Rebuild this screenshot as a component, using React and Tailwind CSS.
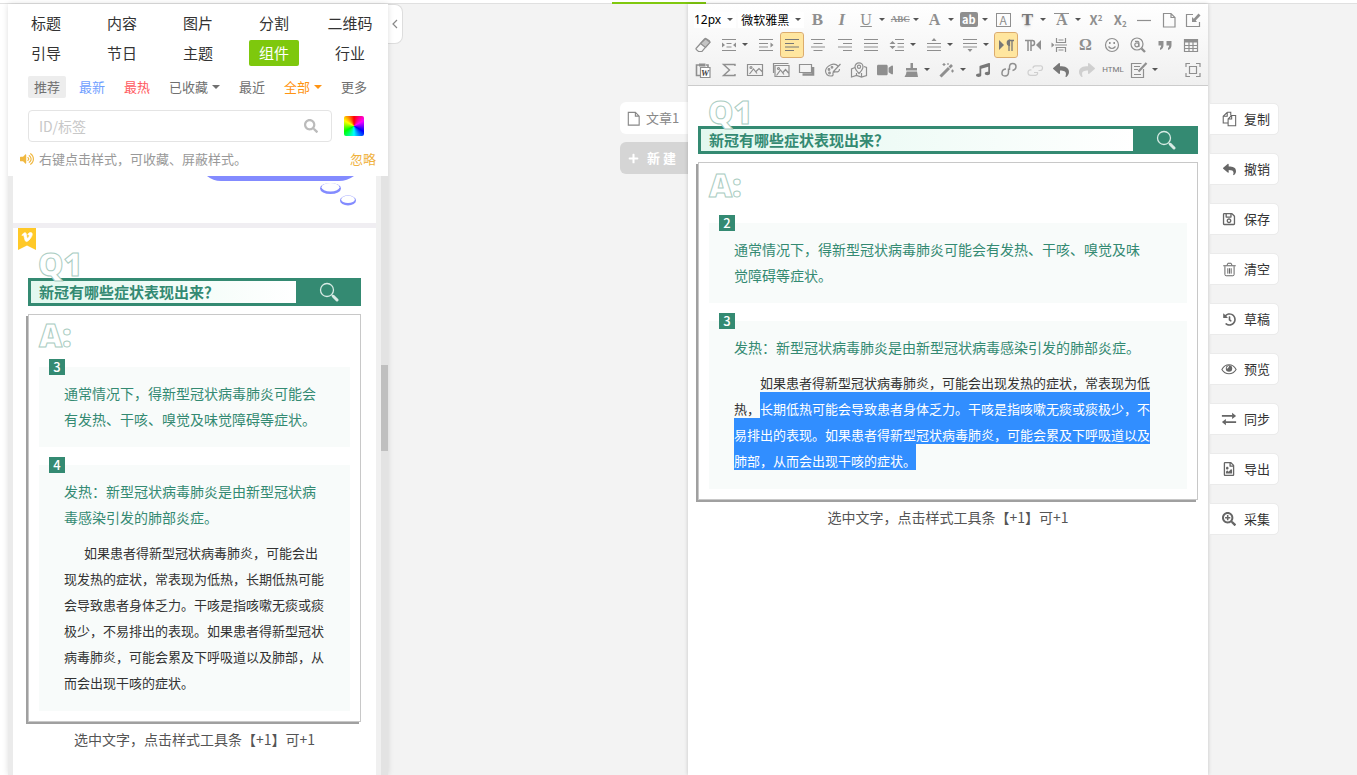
/**
 * @file App.jsx
 * @brief Rich text editor: style library on the left, article editor on the right
 */

import { useState } from 'react'
import { FaSearch, FaVolumeUp, FaReply, FaRegSave, FaHistory, FaRegFileImage, FaSearchPlus, FaPlus, FaVimeoV, FaMusic, FaShare, FaVideo } from 'react-icons/fa'

const CATEGORIES = ['标题', '内容', '图片', '分割', '二维码', '引导', '节日', '主题', '组件', '行业']

const FILTERS = [
  { label: '推荐', className: 'bg-[#ededed] text-[#707070]' },
  { label: '最新', className: 'text-[#6fa0ff]' },
  { label: '最热', className: 'text-[#ff5a5f]' },
  { label: '已收藏', className: 'text-[#707070]', caret: true },
  { label: '最近', className: 'text-[#707070]' },
  { label: '全部', className: 'text-[#ff9412]', caret: true },
  { label: '更多', className: 'text-[#707070]' },
]

/* ---------- icons ---------- */

function Icon({ children, size = 18, className = '' }) {
  return (
    <svg width={size} height={size} viewBox="0 0 18 18" fill="none" stroke="currentColor" strokeWidth="1.2" className={className} aria-hidden="true">
      {children}
    </svg>
  )
}

const PageIcon = ({ size }) => (
  <Icon size={size}><path d="M3.5 2.5h7.5l4 4v9.5H3.5zM11 2.5v4h4" /></Icon>
)

const FilesIcon = () => (
  <Icon size={16}><path d="M7 1.500L2.500 6v7.500H8M7 1.500V6H2.500M7 1.500h4V5M12 5L8 9v7.500h8.500V5zM12 5v4H8" /></Icon>
)

const TrashIcon = () => (
  <Icon size={15}><path d="M3.500 5v10q0 1.500 1.500 1.500h8q1.500 0 1.500-1.500V5M1.500 4.500h15M6 4l1-2.500h4L12 4M7 7.500V14M9 7.500V14M11 7.500V14" /></Icon>
)

const EyeIcon = () => (
  <Icon size={16}>
    <path d="M1 9.500C3 6 6 4.300 9 4.300s6 1.700 8 5.200c-2 3.200-5 4.800-8 4.800s-6-1.600-8-4.800z" />
    <circle cx="9" cy="8.500" r="3.600" fill="currentColor" stroke="none" />
    <path d="M7 8.300a2 2 0 0 1 2-2" stroke="#fff" />
  </Icon>
)

const ExchangeIcon = () => (
  <Icon size={16}>
    <path d="M1 5.500h12M5 12.500h12" strokeWidth="2" />
    <path d="M12.500 2l4.500 3.500L12.500 9zM5.500 9L1 12.500 5.500 16z" fill="currentColor" stroke="none" />
  </Icon>
)

const LensIcon = () => (
  <svg width="20" height="20" viewBox="0 0 20 20" fill="none" stroke="#d8ebe5" aria-hidden="true">
    <circle cx="8" cy="8" r="6.500" strokeWidth="1.300" />
    <path d="M12.800 12.800l1.800 1.800" strokeWidth="1.200" />
    <path d="M14.300 14.300l3.700 3.700" strokeWidth="3" strokeLinecap="round" />
  </svg>
)

const ICONS = {
  boxEdit: <Icon><path d="M9 3.500H2.500v12h13V11" /><path d="M8 11V6l1.800 1.800L14.500 2.500l2 2-4.800 5L13 11z" fill="currentColor" stroke="none" /></Icon>,
  dash: <Icon><path d="M2 9.500h14" /></Icon>,
  eraser: <Icon><path d="M2 12.500L10.500 3q.8-1 1.800-.3l3 2q1 .8.200 1.800L8 15.500H4.500L2.200 13.500z" /><path d="M6.500 7.500l5 4 4.500-5.200-4.500-3.500z" fill="#c4c4c4" /></Icon>,
  indentBoth: <Icon><path d="M2 3.500h14M6.500 7.500h5M6.500 11h5M2 14.500h14" /><path d="M2 6.500v5L5 9zM16 6.500v5L13 9z" fill="currentColor" stroke="none" /></Icon>,
  indent: <Icon><path d="M2 3.500h14M2 7.500h9M2 11h9M2 14.500h14" /><path d="M13.500 6.500v5l3-2.500z" fill="currentColor" stroke="none" /></Icon>,
  left: <Icon><path d="M2 3.500h14M2 7.500h9M2 11h14M2 14.500h9" /></Icon>,
  center: <Icon><path d="M2 3.500h14M4.500 7.500h9M2 11h14M4.500 14.500h9" /></Icon>,
  right: <Icon><path d="M2 3.500h14M7 7.500h9M2 11h14M7 14.500h9" /></Icon>,
  justify: <Icon><path d="M2 3.500h14M2 7.500h14M2 11h14M2 14.500h14" /></Icon>,
  lineHeight: <Icon><path d="M7 3.500h9M9.500 7.500H16M9.500 11H16M7 14.500h9" /><path d="M1.500 8L4.500 5l3 3zM1.500 10l3 3 3-3z" fill="currentColor" stroke="none" /></Icon>,
  spaceTop: <Icon><path d="M2 7.500h14M2 11h14M2 14.500h14" /><path d="M6.500 5L9 2l2.500 3z" fill="currentColor" stroke="none" /></Icon>,
  spaceBottom: <Icon><path d="M2 3.500h14M2 7.500h14M2 11h14" /><path d="M6.500 13L9 16l2.500-3z" fill="currentColor" stroke="none" /></Icon>,
  ltr: <Icon><path d="M2 4v10l5-5z" fill="currentColor" stroke="none" /><path d="M11.500 4.500h5.500M12 9v6M15 4.500V15" strokeWidth="1.300" /><path d="M12.500 4a2.800 2.800 0 0 0 0 5.500z" fill="currentColor" /></Icon>,
  rtl: <Icon><path d="M17 4v10l-5-5z" fill="currentColor" stroke="none" /><path d="M1 4.500h8M4 4.500V15M7 4.500V15M7 9.500h1.500q2 0 2-2.500t-2-2.500" strokeWidth="1.500" /></Icon>,
  pageBreak: <Icon><path d="M6.500 2v4.500h9V2M6.500 16v-4.500h9V16M8.500 4h5M8.500 14h5M5 9h12" /><path d="M1.500 6.500v5l3-2.500z" fill="currentColor" stroke="none" /></Icon>,
  smile: <Icon><circle cx="9" cy="9" r="6.500" /><path d="M5.500 10.500q3.500 4 7 0" /><path d="M6.800 6v2M11.200 6v2" strokeWidth="1.600" /></Icon>,
  findText: <Icon><circle cx="8" cy="8" r="6" /><path d="M12.500 12.500l3.500 3.500" strokeWidth="2.400" /><circle cx="7.800" cy="8.800" r="2" /><path d="M6 5.300h2.500q1.400 0 1.400 1.500V11" /></Icon>,
  quote: <Icon><path d="M2.500 5h5v4q0 4-3.500 5v-2q1.200-.6 1.200-2.500H2.500zM10.500 5h5v4q0 4-3.500 5v-2q1.200-.6 1.200-2.500h-2.700z" fill="currentColor" stroke="none" /></Icon>,
  table: <Icon><path d="M2.500 3.500h13v12h-13zM2.500 9.500h13M2.500 12.500h13M7 5v10M11 5v10" /><path d="M2.500 3h13v3.500h-13z" fill="currentColor" stroke="none" /></Icon>,
  word: <Icon><path d="M6 4H2.500v10.500H6M12 4h2v2" strokeWidth="1.600" /><path d="M5 2.500h6.500v3H5z" fill="currentColor" stroke="none" /><path d="M6.500 6.500h9.500v10H6.500z" fill="#fff" /><text x="7" y="15" fontSize="9" fontWeight="700" fontStyle="italic" fontFamily="Liberation Serif, serif" fill="#444" stroke="none">W</text></Icon>,
  sigma: <Icon><path d="M15 5V3.500H3.500L9.500 9l-6 5.500H15V13" strokeWidth="1.400" /></Icon>,
  image: <Icon><path d="M1.500 3.500h15v11h-15zM3.500 13l4-5 3.500 4.500M9.500 11l3.500-3.500 3.500 3.500" /><circle cx="5" cy="6.500" r="1" /></Icon>,
  images: <Icon><path d="M1.500 12V2.500h15M3 4.500h14v11H3zM4.500 14.500L8.500 9l3.500 4.500M10.500 12l3-3.500 3 3.500" /><circle cx="6.500" cy="7.500" r="1" /></Icon>,
  layers: <Icon><path d="M1.500 3.500h12v8h-12z" /><path d="M15 6v7.500H4.500" strokeWidth="2.600" /></Icon>,
  palette: <Icon><path d="M14 5Q11 2 6.500 4T1.500 10q.5 5 5.500 5 2.500 0 2-2t2-2.200q4.500.6 4.500-2.800M16.500 3L9 11" /><circle cx="5" cy="8.500" r=".8" /><circle cx="8" cy="6.300" r=".8" /><circle cx="5.500" cy="12" r=".8" /></Icon>,
  map: <Icon><path d="M5 6.500L1.500 8v8l5-1.500 5 1.500 5-1.500v-8L14 5.500M6.500 12v2.500M11.500 12v4" /><path d="M9 12.500Q5 8.500 5 5.800a4 4 0 0 1 8 0Q13 8.500 9 12.500z" /><circle cx="9" cy="5.800" r="1.600" /></Icon>,
  broom: <Icon><path d="M8.500 2h2.500v5h4v2.500H4V7h4.500zM4.500 10.500h10.500l1 5.500H2.500q2-2.500 2-5.500z" fill="currentColor" stroke="none" /></Icon>,
  wand: <Icon><path d="M2.500 15.500L11 7" strokeWidth="3" /><path d="M11.500 6.500L14 4" strokeWidth="2.600" /><path d="M6 2v3M4.500 3.500h3M14.500 8.500v3M13 10h3M10 2v2" /></Icon>,
  link: <Icon><path d="M9.500 9V6q0-3.500 3.200-3.500T16 5.500 12.500 9.500M8.500 7.500V11q0 4-3.500 4t-3-3.500 4-3.500" strokeWidth="1.500" /></Icon>,
  unlink: <Icon><path d="M12.500 9.500h1.500q2.500 0 2.500-2.500T14 4.800H9.500Q7 5 7 7.200M5.500 9Q2 8.500 2 11.500t3 2.800h4.500Q12 14 11.500 11.500H8" /></Icon>,
  editNote: <Icon><path d="M13.500 8v8.500h-12v-14h10M4 5.500h6M4 8.500h4M4 13.500h7" /><path d="M8.500 10.500L16.500 2" strokeWidth="2.200" /></Icon>,
  fullscreen: <Icon><path d="M5.500 5.500h7v7h-7zM2 6V2.500h4M12 2.500h4V6M16 12v3.500h-4M6 15.500H2V12" /></Icon>,
}

const TOOL_ROWS = [
  [
    { id: 'bold', node: <b className="font-['Liberation_Serif',serif] text-[17px]">B</b> },
    { id: 'italic', node: <b className="font-['Liberation_Serif',serif] text-[17px] italic">I</b> },
    { id: 'underline', node: <span className="font-['Liberation_Serif',serif] text-base underline">U</span>, caret: true },
    { id: 'strike', node: <b className="font-['Liberation_Serif',serif] text-[9px] line-through">ABC</b>, caret: true },
    { id: 'color', node: <b className="font-['Liberation_Serif',serif] text-base">A</b>, caret: true },
    { id: 'highlight', node: <b className="rounded-xs bg-[#8f8f8f] px-0.5 text-[11px] leading-[15px] text-white">ab</b>, caret: true },
    { id: 'frame', node: <span className="w-[15px] border border-[#8f8f8f] text-center text-xs leading-3">A</span> },
    { id: 'shadow', node: <b className="font-['Liberation_Serif',serif] text-[17px] text-[#777] text-shadow-md">T</b>, caret: true },
    { id: 'overline', node: <b className="border-t border-[#8f8f8f] px-0.5 font-['Liberation_Serif',serif] text-base leading-3">A</b>, caret: true },
    { id: 'sup', node: <b className="text-[13px]">X<sup className="text-[8px]">2</sup></b> },
    { id: 'sub', node: <b className="text-[13px]">X<sub className="text-[8px]">2</sub></b> },
    { id: 'dash', node: ICONS.dash },
    { id: 'page', node: <PageIcon size={18} /> },
    { id: 'boxEdit', node: ICONS.boxEdit },
  ],
  [
    { id: 'eraser', node: ICONS.eraser },
    { id: 'indentBoth', node: ICONS.indentBoth, caret: true },
    { id: 'indent', node: ICONS.indent },
    { id: 'left', node: ICONS.left, active: true },
    { id: 'center', node: ICONS.center },
    { id: 'right', node: ICONS.right },
    { id: 'justify', node: ICONS.justify },
    { id: 'lineHeight', node: ICONS.lineHeight, caret: true },
    { id: 'spaceTop', node: ICONS.spaceTop, caret: true },
    { id: 'spaceBottom', node: ICONS.spaceBottom, caret: true },
    { id: 'ltr', node: ICONS.ltr, active: true },
    { id: 'rtl', node: ICONS.rtl },
    { id: 'pageBreak', node: ICONS.pageBreak },
    { id: 'omega', node: <b className="font-['Liberation_Serif',serif] text-base">Ω</b> },
    { id: 'smile', node: ICONS.smile },
    { id: 'findText', node: ICONS.findText },
    { id: 'quote', node: ICONS.quote },
    { id: 'table', node: ICONS.table },
  ],
  [
    { id: 'word', node: ICONS.word },
    { id: 'sigma', node: ICONS.sigma },
    { id: 'image', node: ICONS.image },
    { id: 'images', node: ICONS.images },
    { id: 'layers', node: ICONS.layers },
    { id: 'palette', node: ICONS.palette },
    { id: 'map', node: ICONS.map },
    { id: 'video', node: <FaVideo size={16} /> },
    { id: 'broom', node: ICONS.broom, caret: true },
    { id: 'wand', node: ICONS.wand, caret: true },
    { id: 'music', node: <FaMusic size={14} className="text-[#777]" /> },
    { id: 'link', node: ICONS.link },
    { id: 'unlink', node: ICONS.unlink, disabled: true },
    { id: 'undo', node: <FaReply size={16} className="text-[#777]" /> },
    { id: 'redo', node: <FaShare size={16} />, disabled: true },
    { id: 'html', node: <span className="font-['Roboto',sans-serif] text-[8px] text-[#777]">HTML</span> },
    { id: 'editNote', node: ICONS.editNote, caret: true },
    { id: 'fullscreen', node: ICONS.fullscreen, last: true },
  ],
]

const ACTIONS = [
  { label: '复制', icon: <FilesIcon /> },
  { label: '撤销', icon: <FaReply size={13} /> },
  { label: '保存', icon: <FaRegSave size={14} /> },
  { label: '清空', icon: <TrashIcon /> },
  { label: '草稿', icon: <FaHistory size={13} /> },
  { label: '预览', icon: <EyeIcon /> },
  { label: '同步', icon: <ExchangeIcon /> },
  { label: '导出', icon: <FaRegFileImage size={14} /> },
  { label: '采集', icon: <FaSearchPlus size={14} /> },
]

/* ---------- toolbar ---------- */

const Caret = () => <span className="border-x-[3px] border-t-[3px] border-x-transparent border-t-[#555]" />

function ToolButton({ id, node, caret, active, disabled, last }) {
  return (
    <button
      type="button"
      aria-label={id}
      disabled={disabled}
      className={`flex h-6 shrink-0 items-center leading-none ${last ? 'ml-auto' : ''} ${disabled ? 'opacity-35' : ''}`}
    >
      <span className={`flex h-6 w-[22px] items-center justify-center ${active ? 'rounded-xs bg-[#ffe69f] text-[#777] outline outline-[#dcac6c]' : ''}`}>
        {node}
      </span>
      {caret && <span className="flex w-[10px] justify-center"><Caret /></span>}
    </button>
  )
}

function Toolbar() {
  return (
    <div className="border-b border-[#ccc] bg-linear-to-b from-white to-[#f0f0f0] px-1 py-[3px] text-[#8f8f8f]">
      <div className="flex h-[25px] items-center justify-between pl-0.5">
        <button type="button" className="flex w-[42px] items-center gap-1.5 bg-white font-['Noto_Sans',sans-serif] text-xs text-black">12px<Caret /></button>
        <button type="button" className="flex w-[66px] items-center justify-center gap-1.5 bg-white text-xs text-black">微软雅黑<Caret /></button>
        {TOOL_ROWS[0].map((tool) => <ToolButton key={tool.id} {...tool} />)}
      </div>
      <div className="flex h-[25px] items-center justify-between pr-0.5">
        {TOOL_ROWS[1].map((tool) => <ToolButton key={tool.id} {...tool} />)}
      </div>
      <div className="flex h-[25px] items-center gap-1">
        {TOOL_ROWS[2].map((tool) => <ToolButton key={tool.id} {...tool} />)}
      </div>
    </div>
  )
}

/* ---------- question / answer template ---------- */

function OutlineText({ children }) {
  return (
    <span className="relative z-10 block font-['Open_Sans',sans-serif] text-[32px] leading-5 font-extrabold text-white [-webkit-text-stroke:1px_#a9ccc1]">
      {children}
    </span>
  )
}

function AnswerBlock({ number, lead, children }) {
  return (
    <section className="bg-[#f8fbfa] px-[25px] pb-[15px]">
      <div className="flex h-[13px]">
        <span className="-mt-2 -ml-[15px] h-4 w-4 bg-[#348a72] text-center text-[13px] leading-4 font-medium text-white">{number}</span>
      </div>
      <p className="pr-[9px] text-sm leading-[26px] text-[#348a72]">{lead}</p>
      {children}
    </section>
  )
}

function QaTemplate({ numbers, answerTop, indent, children }) {
  return (
    <article>
      <div className="h-6 pl-2.5"><OutlineText>Q1</OutlineText></div>
      <div className="flex h-7 bg-[#348a72] p-[3px]">
        <h2 className="flex-1 bg-linear-to-r from-[#e2f8ef] to-white pl-2 text-[15px] leading-[22px] font-bold text-[#348a72]">新冠有哪些症状表现出来？</h2>
        <div className="flex w-[62px] items-center justify-center pl-1"><LensIcon /></div>
      </div>
      <div className="mt-2 border border-[#c8c8c8] bg-white px-2.5 pb-2.5 shadow-[-2px_2px_0_#a0a0a0]">
        <div className={answerTop}><OutlineText>A:</OutlineText></div>
        <div className="flex flex-col gap-[18px]">
          <AnswerBlock number={numbers[0]} lead="通常情况下，得新型冠状病毒肺炎可能会有发热、干咳、嗅觉及味觉障碍等症状。" />
          <AnswerBlock number={numbers[1]} lead="发热：新型冠状病毒肺炎是由新型冠状病毒感染引发的肺部炎症。">
            <p className={`mt-2.5 text-[13px] leading-[26px] text-[#333] ${indent}`}>{children}</p>
          </AnswerBlock>
        </div>
      </div>
      <p className="mt-1 text-center text-sm leading-[26px] text-[#555]">选中文字，点击样式工具条【+1】可+1</p>
    </article>
  )
}

/* ---------- style library ---------- */

function StyleFilters() {
  const [active, setActive] = useState('组件')

  return (
    <div className="h-[172px] shrink-0 bg-white pt-1">
      <nav className="grid grid-cols-5">
        {CATEGORIES.map((name) => (
          <div key={name} className="flex h-[30px] items-center justify-center">
            <button
              type="button"
              onClick={() => setActive(name)}
              className={`h-[26px] rounded-xs text-[15px] leading-[26px] ${name === active ? 'bg-[#7ec80d] px-2.5 text-white' : 'text-[#333]'}`}
            >
              {name}
            </button>
          </div>
        ))}
      </nav>
      <div className="mt-2 flex gap-[7px] pl-5">
        {FILTERS.map(({ label, className, caret }) => (
          <button key={label} type="button" className={`flex h-[22px] items-center gap-1 rounded-xs px-1.5 text-[13px] ${className}`}>
            {label}
            {caret && <span className="border-x-4 border-t-4 border-x-transparent border-t-current" />}
          </button>
        ))}
      </div>
      <div className="mt-3 flex items-center gap-3 pr-6 pl-5">
        <label className="flex h-8 flex-1 items-center rounded-sm border border-[#e4e4e4] px-2.5">
          <input type="text" aria-label="ID/标签" placeholder="ID/标签" className="min-w-0 flex-1 text-sm outline-none placeholder:text-[#c8c8c8]" />
          <FaSearch size={14} className="mr-[3px] text-[#bbb]" />
        </label>
        <button type="button" aria-label="颜色" className="h-5 w-5 rounded-xs bg-[conic-gradient(#f00,#f0f,#00f,#0ff,#0f0,#ff0,#f00)]" />
      </div>
      <div className="mt-[7px] flex items-center px-3 text-[13px] leading-5 text-[#999]">
        <FaVolumeUp size={14} className="mr-[5px] text-[#f0b840]" />
        右键点击样式，可收藏、屏蔽样式。
        <button type="button" className="ml-auto text-[#f0b23e]">忽略</button>
      </div>
    </div>
  )
}

function StyleLibrary() {
  return (
    <aside className="relative z-10 ml-2 flex w-[380px] shrink-0 flex-col overflow-hidden bg-[#ebebeb] shadow-[0_0_6px_#0002]">
      <StyleFilters />
      <div className="flex min-h-0 flex-1 border-l-[5px] border-[#ebebeb]">
        <div className="flex flex-1 flex-col gap-[5px] overflow-hidden bg-[#f0eef2]">
          <div className="flex h-[47px] shrink-0 justify-end bg-white pr-[17px]">
            <svg width="154" height="30" viewBox="0 0 154 30" aria-hidden="true">
              <path d="M2 0Q8 5 16 5H134Q142 5 149 0Z" fill="#838bff" />
              <ellipse cx="125.500" cy="12.500" rx="10.500" ry="5.500" fill="#838bff" />
              <ellipse cx="125.500" cy="11.300" rx="9" ry="4.200" fill="#fff" />
              <ellipse cx="143" cy="24.500" rx="8" ry="5" fill="#838bff" />
              <ellipse cx="143" cy="23.400" rx="6.800" ry="3.600" fill="#fff" />
            </svg>
          </div>
          <div className="relative min-h-0 flex-1 bg-white px-[15px] pt-[26px]">
            <span className="absolute top-0 left-[5px] flex h-[22px] w-[18px] justify-center bg-[#ffc928] pt-[3px] text-white [clip-path:polygon(0_0,100%_0,100%_100%,50%_80%,0_100%)]">
              <FaVimeoV size={12} stroke="currentColor" strokeWidth={30} />
            </span>
            <QaTemplate numbers={[3, 4]} answerTop="h-[52px] pt-[10px]" indent="indent-5">
              如果患者得新型冠状病毒肺炎，可能会出现发热的症状，常表现为低热，长期低热可能会导致患者身体乏力。干咳是指咳嗽无痰或痰极少，不易排出的表现。如果患者得新型冠状病毒肺炎，可能会累及下呼吸道以及肺部，从而会出现干咳的症状。
            </QaTemplate>
          </div>
        </div>
        <div className="w-[5px] bg-[#f0f0f0]" />
        <div className="w-[7px] bg-[#e3e3e3] pt-[189px]">
          <div className="h-[86px] bg-[#bfbfbf]" />
        </div>
      </div>
    </aside>
  )
}

/* ---------- article editor ---------- */

function ArticleEditor() {
  return (
    <main className="flex flex-1 justify-end bg-[#f3f3f3] pr-[79px]">
      <div className="flex w-[68px] flex-col gap-2 pt-[98px] text-[13px]">
        <button type="button" className="flex h-8 items-center gap-1 rounded-l-md bg-white pl-[5px] text-[#888]">
          <PageIcon size={17} />文章1
        </button>
        <button type="button" className="flex h-8 items-center gap-2 rounded-l-md bg-[#d5d5d5] pl-2 font-bold text-white">
          <FaPlus size={11} />新 建
        </button>
      </div>
      <div className="w-[520px] bg-white shadow-[0_0_4px_#0003]">
        <Toolbar />
        <div className="px-2.5 pt-4">
          <QaTemplate numbers={[2, 3]} answerTop="h-[60px] pt-3" indent="indent-[26px]">
            如果患者得新型冠状病毒肺炎，可能会出现发热的症状，常表现为低热，<span className="bg-[#318eff] pt-[7px] text-white">长期低热可能会导致患者身体乏力。干咳是指咳嗽无痰或痰极少，不易排出的表现。如果患者得新型冠状病毒肺炎，可能会累及下呼吸道以及肺部，从而会出现干咳的症状。</span>
          </QaTemplate>
        </div>
      </div>
      <div className="ml-0.5 flex w-[68px] flex-col gap-5 pt-[100px]">
        {ACTIONS.map(({ label, icon }) => (
          <button key={label} type="button" className="flex h-[30px] shrink-0 items-center rounded-r-sm bg-white pl-2.5 text-[13px] text-[#333] outline outline-[#ebebeb]">
            <span className="flex w-[18px] justify-center text-[#666]">{icon}</span>
            <span className="ml-1.5">{label}</span>
          </button>
        ))}
      </div>
    </main>
  )
}

export default function App() {
  return (
    <div className="flex h-screen flex-col overflow-hidden bg-white font-['Noto_Sans_CJK_SC',sans-serif]">
      <header className="h-1 shrink-0 border-b border-[#e0e0e0]">
        <div className="mt-0.5 ml-[612px] h-0.5 w-[94px] bg-[#80c80e]" />
      </header>
      <div className="flex min-h-0 flex-1">
        <StyleLibrary />
        <div className="bg-[#f3f3f3]">
          <button type="button" aria-label="收起" className="flex h-10 w-[15px] items-center justify-center rounded-r-lg border border-l-0 border-[#ddd] bg-white text-[#888]">
            <svg width="6" height="10" viewBox="0 0 6 10" fill="none" stroke="currentColor" strokeWidth="1.200" aria-hidden="true"><path d="M5 1L1 5l4 4" /></svg>
          </button>
        </div>
        <ArticleEditor />
      </div>
    </div>
  )
}
